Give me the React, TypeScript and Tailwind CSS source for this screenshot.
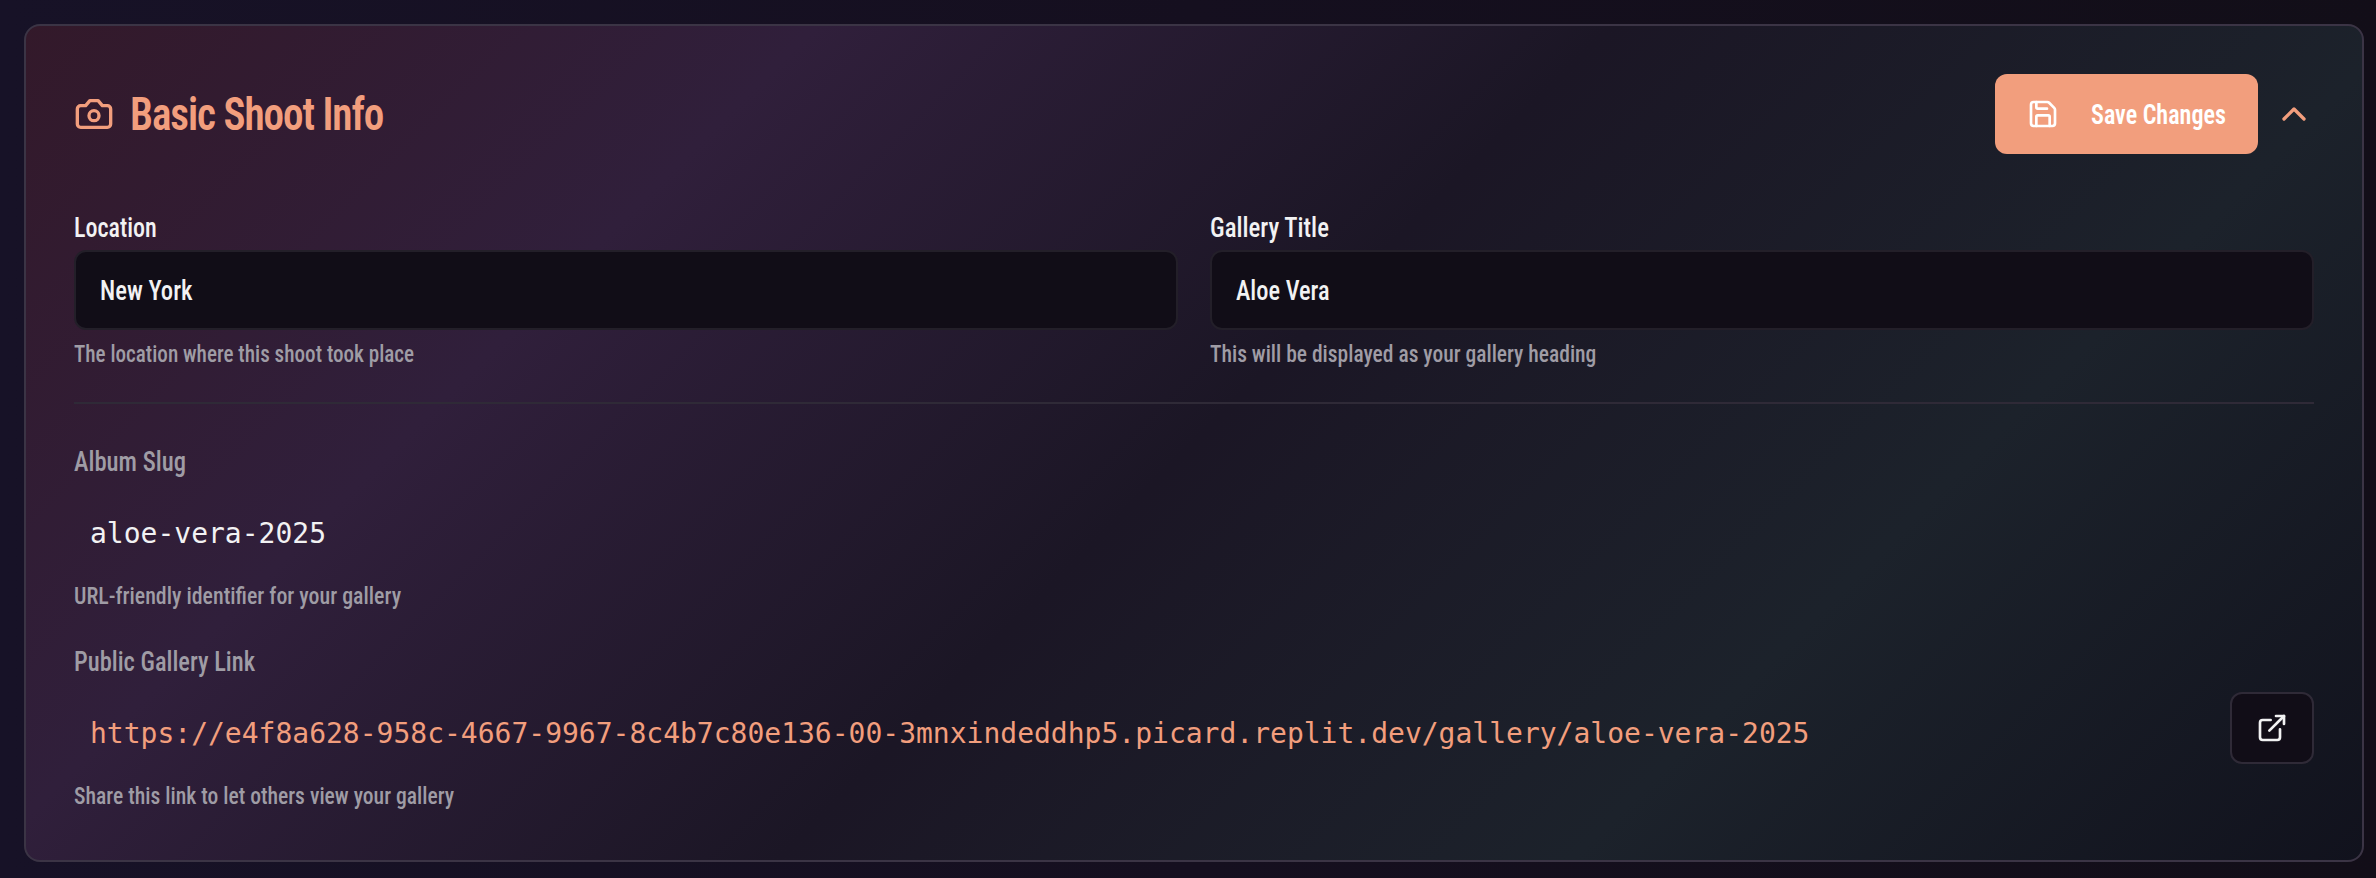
import type { ReactNode } from "react";

type IconProps = { className: string; children: ReactNode };

function Icon({ className, children }: IconProps) {
  return (
    <svg
      viewBox="0 0 24 24"
      fill="none"
      stroke="currentColor"
      strokeWidth="2"
      strokeLinecap="round"
      strokeLinejoin="round"
      className={`shrink-0 ${className}`}
    >
      {children}
    </svg>
  );
}

function Label({ stretch, muted = false, children }: { stretch: string; muted?: boolean; children: string }) {
  return (
    <div className={`h-9 text-[27px] leading-9 font-medium ${muted ? "text-[#9f9ca5]" : "text-[#f2f2f3]"}`}>
      <span className={`inline-block origin-left whitespace-nowrap ${stretch}`}>{children}</span>
    </div>
  );
}

function Hint({ stretch, children }: { stretch: string; children: string }) {
  return (
    <p className="h-8 text-[23.5px] leading-8 font-medium text-[#9f9ca5]">
      <span className={`inline-block origin-left whitespace-nowrap ${stretch}`}>{children}</span>
    </p>
  );
}

function Field({ value, stretch }: { value: string; stretch: string }) {
  return (
    <div className="mt-1 mb-2 flex h-20 items-center rounded-xl border-2 border-[#231f29] bg-[#110d17] px-6 pt-0.5 text-[27px] font-medium text-[#f2f2f3]">
      <span className={`inline-block origin-left whitespace-nowrap ${stretch}`}>{value}</span>
    </div>
  );
}

export default function App() {
  return (
    <main className="h-[878px] w-[2376px] bg-linear-to-r from-[#171227] via-[#150f1f] to-[#120e18] pt-6 pr-3 pb-4 pl-6 font-['Roboto_Condensed',Roboto,sans-serif]">
      <section className="h-[838px] rounded-2xl border-2 border-[#3b3445] bg-[linear-gradient(135deg,#33192a_0%,#301f3b_25%,#1b1625_50%,#1c222b_75%,#11121d_100%)] bg-origin-border p-12">
        <header className="flex h-20 items-center justify-between text-[#f29e7d]">
          <div className="flex items-center gap-4">
            <Icon className="size-10">
              <path d="M14.5 4h-5L7 7H4a2 2 0 0 0-2 2v9a2 2 0 0 0 2 2h16a2 2 0 0 0 2-2V9a2 2 0 0 0-2-2h-3l-2.5-3z" />
              <circle cx="12" cy="13" r="3" />
            </Icon>
            <h2 className="origin-left scale-x-[0.876] text-[47px] leading-14 font-semibold tracking-[-1.2px] whitespace-nowrap">
              Basic Shoot Info
            </h2>
          </div>
          <div className="flex items-center gap-4">
            <button className="flex h-20 w-[263px] items-center gap-8 rounded-xl bg-[#f29e7d] px-8 text-[27px] font-semibold text-white">
              <Icon className="size-8">
                <path d="M15.2 3a2 2 0 0 1 1.4.6l3.8 3.8a2 2 0 0 1 .6 1.4V19a2 2 0 0 1-2 2H5a2 2 0 0 1-2-2V5a2 2 0 0 1 2-2z" />
                <path d="M17 21v-7a1 1 0 0 0-1-1H8a1 1 0 0 0-1 1v7" />
                <path d="M7 3v4a1 1 0 0 0 1 1h7" />
              </Icon>
              <span className="w-[134px] origin-left scale-x-[0.892] pt-0.5 text-left whitespace-nowrap">Save Changes</span>
            </button>
            <Icon className="size-10">
              <path d="m18 15-6-6-6 6" />
            </Icon>
          </div>
        </header>

        <div className="mt-14 grid grid-cols-2 gap-8">
          <div>
            <Label stretch="scale-x-[0.89]">Location</Label>
            <Field value="New York" stretch="scale-x-[0.915]" />
            <Hint stretch="scale-x-[0.899]">The location where this shoot took place</Hint>
          </div>
          <div>
            <Label stretch="scale-x-[0.922]">Gallery Title</Label>
            <Field value="Aloe Vera" stretch="scale-x-[0.904]" />
            <Hint stretch="scale-x-[0.915]">This will be displayed as your gallery heading</Hint>
          </div>
        </div>

        <div className="mt-8 border-t-2 border-[#2f2a37] pt-10">
          <Label muted stretch="scale-x-[0.912]">Album Slug</Label>
          <div className="mt-2 mb-0.5 flex h-[90px] items-center px-4 pt-0.5 font-['DejaVu_Sans_Mono',monospace] text-[28px] text-[#f2f2f3]">
            aloe-vera-2025
          </div>
          <Hint stretch="scale-x-[0.931]">URL-friendly identifier for your gallery</Hint>
        </div>

        <div className="mt-8">
          <Label muted stretch="scale-x-[0.906]">Public Gallery Link</Label>
          <div className="mt-2 mb-0.5 flex h-[90px] justify-between">
            <div className="flex items-center px-4 pt-0.5 font-['DejaVu_Sans_Mono',monospace] text-[28px] text-[#f29e7d]">
              https://e4f8a628-958c-4667-9967-8c4b7c80e136-00-3mnxindeddhp5.picard.replit.dev/gallery/aloe-vera-2025
            </div>
            <button className="mt-1 flex h-[72px] w-[84px] items-center justify-center rounded-xl border-2 border-[#2f2a37] bg-[#110d17] text-[#f2f2f3]">
              <Icon className="size-8">
                <path d="M15 3h6v6" />
                <path d="M10 14 21 3" />
                <path d="M18 13v6a2 2 0 0 1-2 2H5a2 2 0 0 1-2-2V8a2 2 0 0 1 2-2h6" />
              </Icon>
            </button>
          </div>
          <Hint stretch="scale-x-[0.919]">Share this link to let others view your gallery</Hint>
        </div>
      </section>
    </main>
  );
}
